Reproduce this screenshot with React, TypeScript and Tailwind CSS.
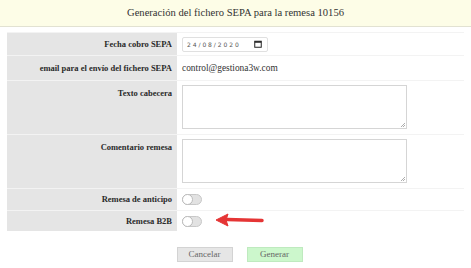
import type { ReactNode } from 'react';

const Row = ({ label, h, children, top = false }: { label: string; h: string; children?: ReactNode; top?: boolean }) => (
  <div className={`grid grid-cols-[170px_1fr] border-t border-[#f3f3f3] ${h}`}>
    <div className={`bg-[#e5e5e5] pr-[5px] text-right text-[8.5px] font-bold text-[#2a2a2a] ${top ? 'pt-[6px]' : 'flex items-center justify-end'}`}>
      {label}
    </div>
    <div className={`pl-[5px] ${top ? 'pt-[4px]' : 'flex items-center'}`}>{children}</div>
  </div>
);

const Toggle = () => (
  <div className="flex h-[11px] w-[20px] items-center rounded-full border border-[#c8c8c8] bg-[#e2e2e2]">
    <div className="h-[11px] w-[11px] -ml-px rounded-full border border-[#bbb] bg-white" />
  </div>
);

const TextArea = () => (
  <div className="relative h-[44px] w-[225px] border border-[#d5d5d5] bg-white">
    <svg className="absolute bottom-0 right-0" width="6" height="6" viewBox="0 0 6 6">
      <path d="M1 5 L5 1 M3 5 L5 3" stroke="#999" strokeWidth="0.8" />
    </svg>
  </div>
);

export default function App() {
  return (
    <div className="h-[268px] w-[471px] bg-white" style={{ fontFamily: '"Liberation Serif", "Times New Roman", serif' }}>
      <div className="flex h-[27px] items-center justify-center border-b border-[#e2e2d2] bg-[#fdfde7] text-[10.6px] text-[#333]">
        Generación del fichero SEPA para la remesa 10156
      </div>

      <div className="ml-[7px] mt-[5px] w-[457px]">
        <Row label="Fecha cobro SEPA" h="h-[23px]">
          <div className="flex h-[15px] w-[86px] items-center justify-between rounded-[2px] border border-[#e0e0e0] bg-white pl-[4px] pr-[5px]">
            <span className="text-[6px] text-[#555] whitespace-pre" style={{ fontFamily: '"DejaVu Sans", sans-serif' }}>
              2 4 / 0 8 / 2 0 2 0
            </span>
            <svg width="8" height="8" viewBox="0 0 8 8">
              <rect x="0.75" y="1.25" width="6.5" height="6" fill="none" stroke="#222" strokeWidth="1" />
              <rect x="0.75" y="1.25" width="6.5" height="1.5" fill="#222" />
            </svg>
          </div>
        </Row>
        <Row label="email para el envío del fichero SEPA" h="h-[25px]">
          <span className="text-[9.4px] text-[#333]">control@gestiona3w.com</span>
        </Row>
        <Row label="Texto cabecera" h="h-[54px]" top>
          <TextArea />
        </Row>
        <Row label="Comentario remesa" h="h-[54px]" top>
          <TextArea />
        </Row>
        <Row label="Remesa de anticipo" h="h-[22px]">
          <Toggle />
        </Row>
        <Row label="Remesa B2B" h="h-[21px]">
          <div className="relative flex items-center">
            <Toggle />
            <svg className="absolute left-[33px] top-[-3px]" width="50" height="14" viewBox="0 0 50 14">
              <path d="M47 7.5 L12 6.5" stroke="#e53535" strokeWidth="3.5" strokeLinecap="round" />
              <path d="M1 7 L13 1 L11 7 L13 13 Z" fill="#e53535" stroke="#e53535" strokeWidth="1" strokeLinejoin="round" />
            </svg>
          </div>
        </Row>
      </div>

      <div className="mt-[16px] flex justify-center gap-[14px] pl-[8px]">
        <button className="h-[15px] w-[56px] border border-[#d3d3d3] bg-[#e6e6e6] text-[9px] leading-none text-[#666]">
          Cancelar
        </button>
        <button className="h-[15px] w-[56px] border border-[#bfeabf] bg-[#ccf7cc] text-[9px] leading-none text-[#666]">
          Generar
        </button>
      </div>
    </div>
  );
}
